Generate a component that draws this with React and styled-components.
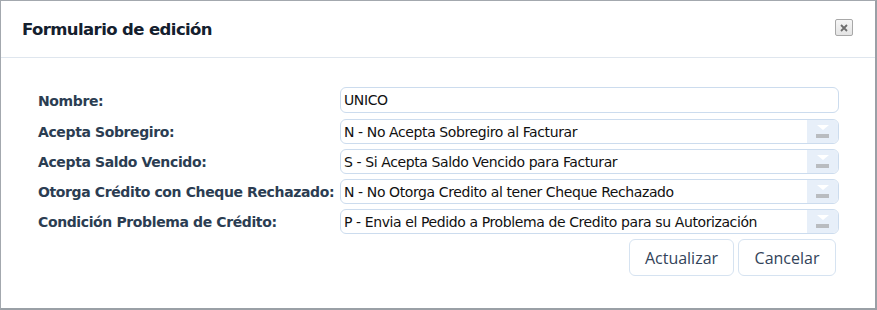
import React from "react";
import styled, { createGlobalStyle } from "styled-components";

const Global = createGlobalStyle`
  html, body { margin: 0; padding: 0; background: #ffffff; }
  * { box-sizing: border-box; }
`;

const Dialog = styled.div`
  width: 877px;
  height: 310px;
  background: #fff;
  border: 1px solid #a3a8ae;
  border-right: 2px solid #9aa0a6;
  border-bottom: 2px solid #9aa0a6;
  display: flex;
  flex-direction: column;
`;

const Header = styled.div`
  height: 57px;
  flex: none;
  display: flex;
  align-items: center;
  justify-content: space-between;
  padding: 0 22px 0 21px;
  border-bottom: 1px solid #dfe6ee;
`;

const Title = styled.h1`
  margin: 0;
  font-family: "DejaVu Sans", Verdana, sans-serif;
  font-weight: bold;
  font-size: 16.5px;
  color: #14202e;
  letter-spacing: -0.6px;
  padding-top: 1px;
`;

const CloseButton = styled.button`
  width: 18px;
  height: 17px;
  padding: 0;
  margin-top: -3px;
  border: 1px solid #a8a8a8;
  border-radius: 2px;
  background: linear-gradient(#f6f6f6, #e4e4e4);
  display: flex;
  align-items: center;
  justify-content: center;
`;

const Body = styled.div`
  padding: 29px 36px 0 37px;
  display: flex;
  flex-direction: column;
`;

const Form = styled.div`
  display: grid;
  grid-template-columns: 302px 1fr;
  row-gap: 5px;
  align-items: center;
`;

const Label = styled.label`
  font-family: "DejaVu Sans", Verdana, sans-serif;
  font-weight: bold;
  font-size: 14px;
  color: #2b3d52;
  letter-spacing: -0.38px;
  white-space: nowrap;
`;

const Field = styled.div`
  height: ${(p) => (p.$first ? 26 : 25)}px;
  margin-bottom: ${(p) => (p.$first ? 1 : 0)}px;
  border: 1px solid #ccdcee;
  border-radius: 6px;
  display: flex;
  align-items: center;
  overflow: hidden;
  background: #fff;
`;

const FieldText = styled.span`
  flex: 1;
  padding-left: 3px;
  font-family: "DejaVu Sans", Tahoma, sans-serif;
  font-size: 14px;
  letter-spacing: -0.4px;
  color: #111;
  white-space: nowrap;
`;

const ArrowBox = styled.span`
  width: 31px;
  height: 100%;
  background: #e7eff9;
  display: flex;
  flex-direction: column;
  align-items: center;
  justify-content: center;
  gap: 4px;
`;

const Tri = styled.span`
  width: 0;
  height: 0;
  border-left: 6px solid transparent;
  border-right: 6px solid transparent;
  border-top: 5px solid #ffffff;
`;

const Bar = styled.span`
  width: 13px;
  height: 4px;
  background: #b9bcc0;
`;

const Actions = styled.div`
  display: flex;
  justify-content: flex-end;
  gap: 4px;
  margin-top: 5px;
  padding-right: 3px;
`;

const Button = styled.button`
  height: 37px;
  width: ${(p) => p.$w}px;
  border: 1px solid #d6e3f1;
  border-radius: 6px;
  background: #fff;
  font-family: "Open Sans", "Noto Sans", sans-serif;
  font-size: 16px;
  color: #33445a;
  padding: 0;
`;

const rows = [
  { label: "Nombre:", value: "UNICO", select: false },
  { label: "Acepta Sobregiro:", value: "N - No Acepta Sobregiro al Facturar", select: true },
  { label: "Acepta Saldo Vencido:", value: "S - Si Acepta Saldo Vencido para Facturar", select: true },
  { label: "Otorga Crédito con Cheque Rechazado:", value: "N - No Otorga Credito al tener Cheque Rechazado", select: true },
  { label: "Condición Problema de Crédito:", value: "P - Envia el Pedido a Problema de Credito para su Autorización", select: true },
];

export default function App() {
  return (
    <>
      <Global />
      <Dialog>
        <Header>
          <Title>Formulario de edición</Title>
          <CloseButton aria-label="close">
            <svg width="10" height="10" viewBox="0 0 10 10">
              <path d="M2 2 L8 8 M8 2 L2 8" stroke="#6f6f6f" strokeWidth="1.8" />
            </svg>
          </CloseButton>
        </Header>
        <Body>
          <Form>
            {rows.map((r, i) => (
              <React.Fragment key={i}>
                <Label>{r.label}</Label>
                <Field $first={i === 0}>
                  <FieldText>{r.value}</FieldText>
                  {r.select && (
                    <ArrowBox>
                      <Tri />
                      <Bar />
                    </ArrowBox>
                  )}
                </Field>
              </React.Fragment>
            ))}
          </Form>
          <Actions>
            <Button $w={105}>Actualizar</Button>
            <Button $w={98}>Cancelar</Button>
          </Actions>
        </Body>
      </Dialog>
    </>
  );
}
